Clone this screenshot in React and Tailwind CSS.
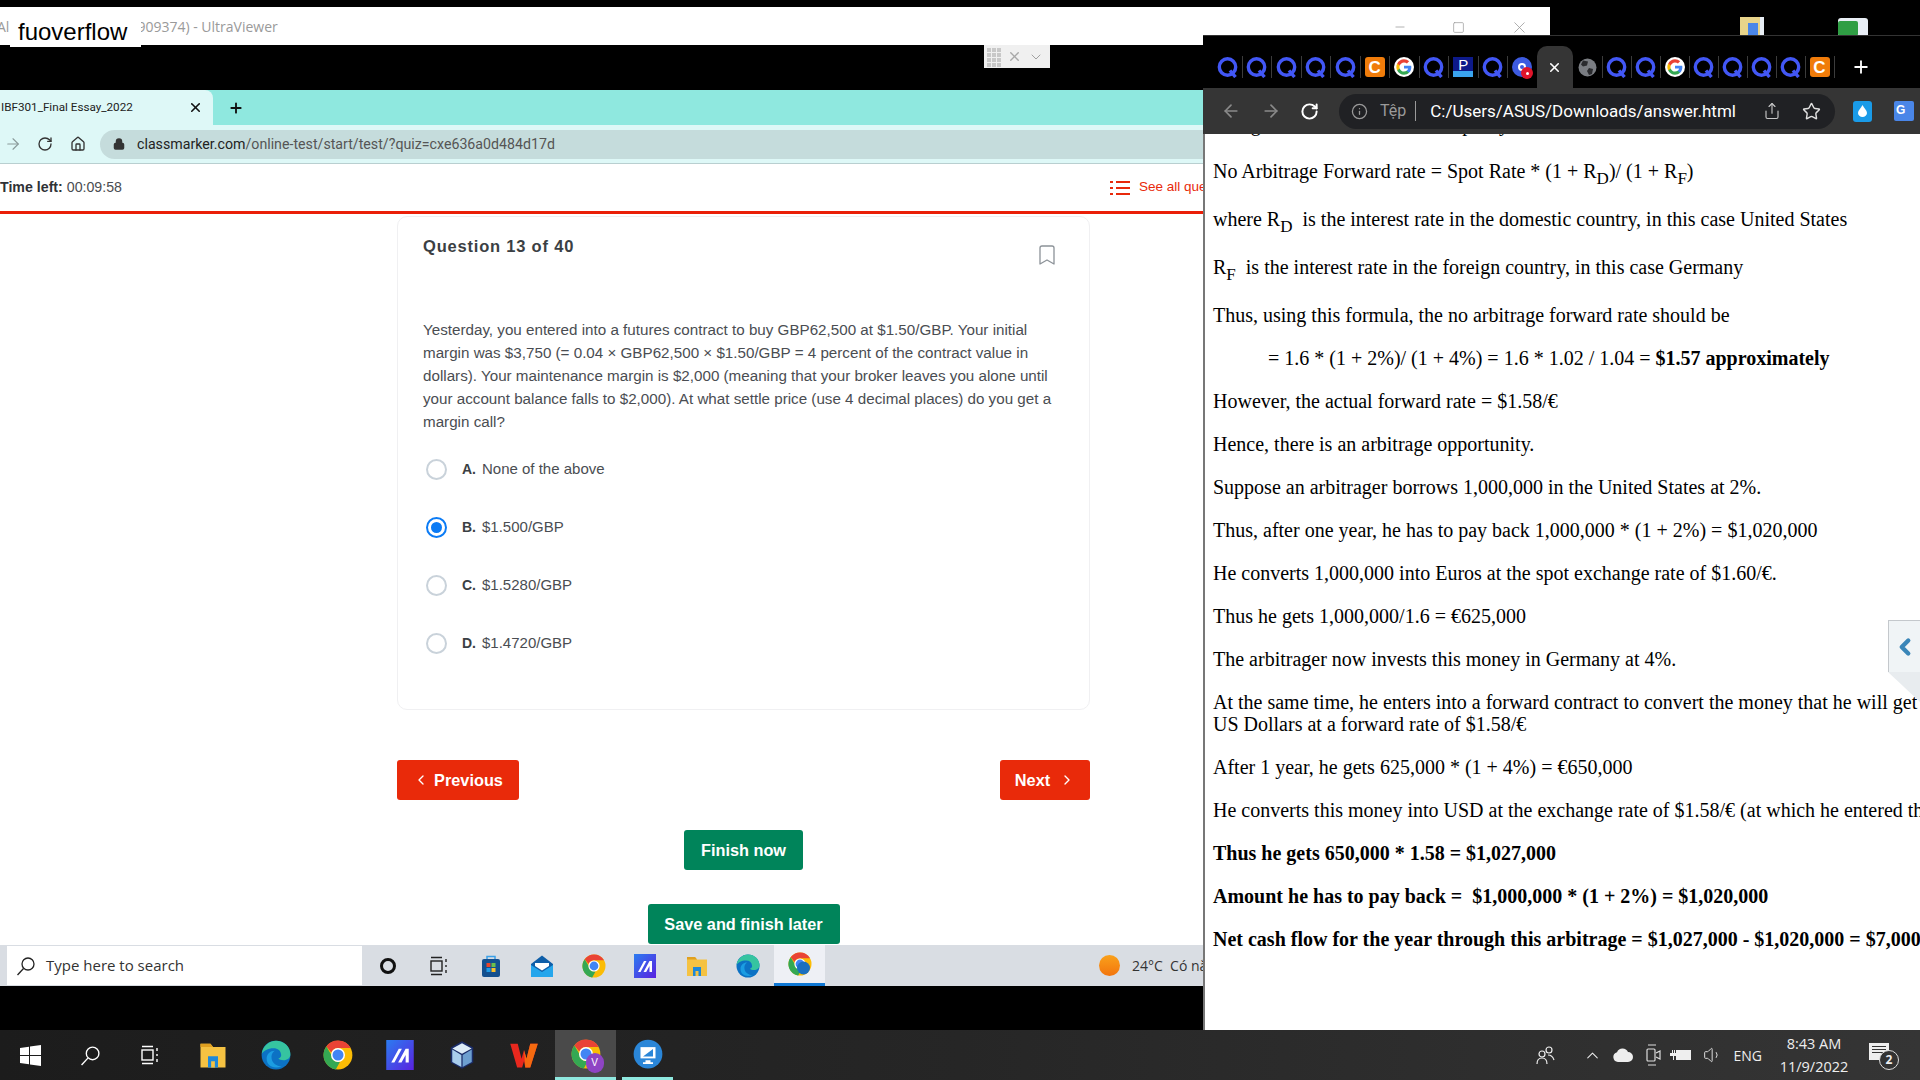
import React from 'react';
import { ArrowLeft, ArrowRight, RotateCw, Home, Lock, Info, Share, Star, Bookmark, ChevronLeft, ChevronRight, ChevronUp, Plus, X, Minus, Square, ChevronDown, Volume1 } from 'lucide-react';

// little app icons -------------------------------------------------------
function ChromeIcon({ size = 24, badge }) {
  return (
    <svg width={size} height={size} viewBox="0 0 24 24">
      <circle cx="12" cy="12" r="11.5" fill="#fbbc05" />
      <path d="M12 .5a11.5 11.5 0 0 1 10 5.8H12a5.7 5.7 0 0 0-5.3 3.6L2.7 5.2A11.5 11.5 0 0 1 12 .5z" fill="#ea4335" />
      <path d="M2.7 5.2l4 6.8a5.7 5.7 0 0 0 6.8 5.5l-3.3 6A11.5 11.5 0 0 1 2.7 5.2z" fill="#34a853" />
      <circle cx="12" cy="12" r="5.6" fill="#fff" />
      <circle cx="12" cy="12" r="4.4" fill="#4285f4" />
      {badge}
    </svg>
  );
}

function EdgeIcon({ size = 24 }) {
  return (
    <svg width={size} height={size} viewBox="0 0 24 24">
      <circle cx="12" cy="12" r="11.5" fill="#0c72c4" />
      <path d="M.6 11C1.4 4.8 6.4.5 12 .5c6.2 0 11.4 4.6 11.5 10.6.1 3.2-2.6 5-5.4 5-2 0-3.5-.6-4.2-1.4 1.6-.4 2.4-1.6 2.2-3C15.800 8.300 13.500 6.500 10 6.500 5.500 6.500 2 8.500.6 11z" fill="#36c4a0" />
      <path d="M4.500 15c0-4 3-6.500 6.500-6.500-2 1.500-3 3.500-2.500 6.500.5 3.500 4 6 8 6.200-1.300.5-2.800.8-4.500.8-4.500 0-7.500-3-7.500-7z" fill="#1b9de2" />
    </svg>
  );
}

function FolderIcon({ size = 24 }) {
  return (
    <svg width={size} height={size} viewBox="0 0 24 24">
      <path d="M2 3h8l2 2.500h10V22H2z" fill="#f5c242" />
      <path d="M2 3h8l2 2.500H2z" fill="#e0a020" />
      <path d="M8 13h8v9H8z" fill="#1e88d8" />
      <path d="M10.500 17h3v5h-3z" fill="#f5c242" />
    </svg>
  );
}

function MarkIcon({ size = 24 }) {
  return (
    <svg width={size} height={size} viewBox="0 0 24 24">
      <defs>
        <linearGradient id="markfill" x1="0" y1="0" x2="1" y2="1">
          <stop offset="0" stopColor="#2b7cf0" />
          <stop offset="1" stopColor="#5a22e0" />
        </linearGradient>
      </defs>
      <rect x="1" y="0" width="22" height="24" fill="url(#markfill)" />
      <path d="M5 18L11 7h2.500L7.500 18zM10.500 18L16.500 7H19v11h-2.500v-6l-3.300 6z" fill="#fff" />
    </svg>
  );
}

function StoreIcon({ size = 24 }) {
  return (
    <svg width={size} height={size} viewBox="0 0 24 24">
      <path d="M8 6V2.500h8V6" fill="none" stroke="#3aa0e8" strokeWidth="1.500" />
      <rect x="3" y="5" width="18" height="18" rx="2" fill="#14508f" />
      <rect x="7.500" y="9" width="4" height="4" fill="#e8442a" />
      <rect x="12.500" y="9" width="4" height="4" fill="#6cc04a" />
      <rect x="7.500" y="14" width="4" height="4" fill="#1e9be8" />
      <rect x="12.500" y="14" width="4" height="4" fill="#fbc02d" />
    </svg>
  );
}

function MailIcon({ size = 24 }) {
  return (
    <svg width={size} height={size} viewBox="0 0 24 24">
      <path d="M12 1.500L23 10v12H1V10z" fill="#0f5ea8" />
      <path d="M1 11l11 7 11-7v12H1z" fill="#25a6ec" />
      <path d="M5 9h14v3l-7 4.500L5 12z" fill="#fff" />
    </svg>
  );
}

function CubeIcon({ size = 24 }) {
  return (
    <svg width={size} height={size} viewBox="0 0 24 24">
      <path d="M12 1l9 5v12l-9 5-9-5V6z" fill="#1a2c68" />
      <path d="M12 2.500l7.700 4.300L12 11 4.300 6.800z" fill="#dcecf8" />
      <path d="M4.200 7.500L11.500 12v9.500l-7.300-4z" fill="#a8cdec" />
      <path d="M19.800 7.500L12.500 12v9.500l7.300-4z" fill="#6d9fd0" />
    </svg>
  );
}

function WpsIcon({ size = 24 }) {
  return (
    <svg width={size} height={size} viewBox="0 0 24 24">
      <path d="M1 3h6l3 12 2-7 2 7 3-12h6l-6 19h-4l-1-5-1.500 5h-4z" fill="#e8281e" />
      <path d="M12 8l2 7 3-12h6l-6 19h-4z" fill="#f56a10" />
    </svg>
  );
}

function MonitorIcon({ size = 24 }) {
  return (
    <svg width={size} height={size} viewBox="0 0 24 24">
      <circle cx="12" cy="12" r="11.500" fill="#2a86d8" />
      <rect x="6" y="6.500" width="12" height="9" fill="#fff" />
      <path d="M8 14l8-6v6z" fill="#2a86d8" />
      <path d="M10 17h4v1.500h2V20H8v-1.500h2z" fill="#fff" />
    </svg>
  );
}

function WeatherDot() {
  return <span className="w-[21px] h-[21px] rounded-full bg-gradient-to-b from-[#f9a11b] to-[#f2740d]" />;
}

function SearchGlass({ size = 20, color = '#222' }) {
  return (
    <svg width={size} height={size} viewBox="0 0 20 20" fill="none" stroke={color} strokeWidth="1.300">
      <circle cx="12" cy="8" r="6" />
      <path d="M7.500 12.500L1.500 19" />
    </svg>
  );
}

function TaskViewIcon({ color = '#222' }) {
  return (
    <svg width="20" height="20" viewBox="0 0 20 20" fill="none" stroke={color} strokeWidth="1.400">
      <path d="M2 1.500h11M2 18.500h11" />
      <rect x="2" y="5" width="11" height="10" />
      <path d="M17 3v3M17 9v2M17 14v3" />
    </svg>
  );
}

function WindowsLogo() {
  return (
    <svg width="21" height="21" viewBox="0 0 21 21" fill="#fff">
      <path d="M0 3l9-1.300V10H0zM10 1.500L21 0v10H10zM0 11h9v8.300L0 18zM10 11h11v10l-11-1.500z" />
    </svg>
  );
}

// favicons in the answer window's tab strip -------------------------------
function QFavicon() {
  return (
    <svg width="21" height="21" viewBox="0 0 21 21" fill="none">
      <circle cx="10.500" cy="10" r="8.200" stroke="#4257f5" strokeWidth="3.400" />
      <path d="M13 13.500l5.500 6.500" stroke="#4257f5" strokeWidth="3.400" />
    </svg>
  );
}

function GoogleFavicon() {
  return (
    <span className="w-[20px] h-[20px] rounded-full bg-white flex items-center justify-center">
      <svg width="16" height="16" viewBox="0 0 24 24">
        <path d="M23 12.300c0-.8-.1-1.600-.2-2.300H12v4.400h6.200c-.3 1.400-1.100 2.600-2.300 3.400v2.800h3.700c2.200-2 3.400-5 3.400-8.300z" fill="#4285f4" />
        <path d="M12 23.500c3.100 0 5.700-1 7.600-2.800l-3.700-2.900c-1 .7-2.300 1.100-3.900 1.100-3 0-5.500-2-6.400-4.700H1.800v2.900c1.900 3.800 5.800 6.400 10.200 6.400z" fill="#34a853" />
        <path d="M5.600 14.200c-.5-1.400-.5-3 0-4.400V6.900H1.800a11.500 11.500 0 0 0 0 10.200z" fill="#fbbc05" />
        <path d="M12 5.100c1.700 0 3.200.6 4.400 1.700l3.300-3.300C17.700 1.600 15.100.5 12 .5 7.600.5 3.700 3.100 1.800 6.900l3.800 2.900C6.500 7.100 9 5.100 12 5.100z" fill="#ea4335" />
      </svg>
    </span>
  );
}

function OrangeC() {
  return (
    <span className="w-[20px] h-[20px] rounded-[3px] bg-[#f07c0a] flex items-center justify-center text-white font-bold text-[17px] leading-none">C</span>
  );
}

function ParkingFav() {
  return (
    <span className="w-[20px] h-[20px] flex flex-col items-center bg-[#3aa4ef] overflow-hidden">
      <span className="w-full h-[14px] bg-[#0d1a8a] text-white text-[15px] leading-[15px] text-center">P</span>
    </span>
  );
}

function RedDotFav() {
  return (
    <span className="relative w-[20px] h-[20px] rounded-full bg-[#3d5be0] flex items-center justify-center">
      <span className="w-[8px] h-[8px] rounded-full border-2 border-white" />
      <span className="absolute -right-[1px] -bottom-[2px] w-[12px] h-[12px] rounded-full bg-[#e0142a] flex items-center justify-center">
        <span className="w-[3px] h-[3px] rounded-full bg-white" />
      </span>
    </span>
  );
}

function GlobeFav() {
  return (
    <svg width="19" height="19" viewBox="0 0 19 19">
      <circle cx="9.500" cy="9.500" r="9" fill="#7a7d82" />
      <path d="M5 2.500l5 1-1 4-4 1-2-2zM11 10l4 1-1 5-3 1-2-4z" fill="#2a2b2e" />
    </svg>
  );
}

const leftTabs = ['q', 'q', 'q', 'q', 'q', 'c', 'g', 'q', 'p', 'q', 'r'];
const rightTabs = ['o', 'q', 'q', 'g', 'q', 'q', 'q', 'q', 'c'];

function Fav({ kind }) {
  if (kind === 'c') return <OrangeC />;
  if (kind === 'g') return <GoogleFavicon />;
  if (kind === 'p') return <ParkingFav />;
  if (kind === 'r') return <RedDotFav />;
  if (kind === 'o') return <GlobeFav />;
  return <QFavicon />;
}

function FavCell({ kind, wide }) {
  return (
    <div className={`h-[42px] flex items-center shrink-0 ${wide ? 'w-[29.500px]' : 'w-[29px]'}`}>
      <div className="w-full h-[22px] border-r border-[#3c3c3c] flex items-center justify-center">
        <Fav kind={kind} />
      </div>
    </div>
  );
}

// the remote screen on the left --------------------------------------------
const options = [
  { key: 'A.', text: 'None of the above' },
  { key: 'B.', text: '$1.500/GBP', checked: true },
  { key: 'C.', text: '$1.5280/GBP' },
  { key: 'D.', text: '$1.4720/GBP' },
];

function QuestionCard() {
  return (
    <div className="w-[693px] h-[494px] mt-[2px] border border-[#f0f0f2] rounded-[10px] px-[25px] pt-[18px]">
      <div className="flex justify-between h-[79px]">
        <h2 className="text-[16.500px] leading-[22px] font-bold text-[#3b3f44] tracking-[0.8px]">Question 13 of 40</h2>
        <Bookmark className="mt-[8px] mr-[5px]" size={24} strokeWidth={1.300} color="#8c9298" />
      </div>
      <p className="mt-[4px] text-[15.200px] leading-[23px] text-[#4a4d52]">
        Yesterday, you entered into a futures contract to buy GBP62,500 at $1.50/GBP. Your initial margin was $3,750 (= 0.04 × GBP62,500 × $1.50/GBP = 4 percent of the contract value in dollars). Your maintenance margin is $2,000 (meaning that your broker leaves you alone until your account balance falls to $2,000). At what settle price (use 4 decimal places) do you get a margin call?
      </p>
      <div className="mt-[7px] flex flex-col">
        {options.map((opt) => (
          <div key={opt.key} className="h-[58px] flex items-center text-[15px] text-[#4a4d52]">
            {opt.checked ? (
              <span className="ml-[3px] w-[21px] h-[21px] rounded-full border-2 border-[#0b7bf5] flex items-center justify-center">
                <span className="w-[11px] h-[11px] rounded-full bg-[#0b7bf5]" />
              </span>
            ) : (
              <span className="ml-[3px] w-[21px] h-[21px] rounded-full border-2 border-[#c9d2da]" />
            )}
            <span className="ml-[15px] font-bold mr-[6px] text-[14px] text-[#3b3f44]">{opt.key}</span>
            <span>{opt.text}</span>
          </div>
        ))}
      </div>
    </div>
  );
}

function QuizPage() {
  return (
    <div className="h-[781px] bg-white overflow-hidden">
      <div className="h-[50px] flex items-center border-b-[3px] border-[#ea1f08]">
        <span className="w-[1109px] shrink-0 text-[14.200px] text-[#4a4d52]"><b className="text-[#2f3236]">Time left:</b> 00:09:58</span>
        <div className="flex items-center gap-[8px] text-[#e8290b] text-[13.500px]">
          <svg width="22" height="18" viewBox="0 0 22 18" fill="none" stroke="#e8290b" strokeWidth="2">
            <path d="M1 3h3M7 3h14M1 9h3M7 9h14M1 15h3M7 15h14" />
          </svg>
          See all questions
        </div>
      </div>
      <div className="ml-[397px] w-[693px] flex flex-col">
        <QuestionCard />
        <div className="mt-[50px] flex justify-between">
          <button className="w-[122px] h-[40px] bg-[#e92a0a] rounded-[3px] text-white font-bold text-[16.300px] flex items-center justify-center gap-[5px]">
            <ChevronLeft size={16} strokeWidth={2} />
            Previous
          </button>
          <button className="w-[90px] h-[40px] bg-[#e92a0a] rounded-[3px] text-white font-bold text-[16.300px] flex items-center justify-center gap-[9px]">
            Next
            <ChevronRight size={16} strokeWidth={2} />
          </button>
        </div>
        <button className="mt-[30px] self-center w-[119px] h-[40px] bg-[#00845a] rounded-[3px] text-white font-bold text-[16.300px]">Finish now</button>
        <button className="mt-[34px] self-center w-[192px] h-[40px] bg-[#00845a] rounded-[3px] text-white font-bold text-[16.300px]">Save and finish later</button>
      </div>
    </div>
  );
}

function RemoteTaskbar() {
  const cells = [
    <span key="o" className="w-[16px] h-[16px] rounded-full border-[3px] border-[#111]" />,
    <TaskViewIcon key="t" />,
    <StoreIcon key="s" />,
    <MailIcon key="m" />,
    <ChromeIcon key="c" />,
    <MarkIcon key="a" />,
    <FolderIcon key="f" />,
    <EdgeIcon key="e" />,
  ];
  return (
    <div className="h-[41px] bg-[#d9dde3] flex items-stretch">
      <div className="ml-[7px] mt-[1px] w-[355px] h-[39px] bg-white flex items-center text-[15px] text-[#333] font-['Open_Sans',sans-serif]">
        <span className="ml-[9px] mr-[10px]"><SearchGlass /></span>
        Type here to search
      </div>
      <div className="flex">
        {cells.map((c) => (
          <div key={c.key} className="w-[51.500px] flex items-center justify-center shrink-0">{c}</div>
        ))}
        <div className="w-[51px] bg-[#eef0f5] border-b-[3px] border-[#0f78d4] flex items-center justify-center">
          <ChromeIcon badge={<circle cx="15.500" cy="16" r="6.500" fill="#1a6fc0" />} />
        </div>
      </div>
      <div className="ml-[274px] flex items-center gap-[12px] text-[14px] text-[#333] font-['Open_Sans',sans-serif]">
        <WeatherDot />
        <span>24°C&nbsp; Có nắng</span>
      </div>
    </div>
  );
}

function UltraViewerWindow() {
  return (
    <div className="absolute left-0 top-[7px] w-[1550px]">
      <div className="h-[38px] bg-white flex items-center justify-between text-[14px] text-[#9a9a9a] font-['Open_Sans',sans-serif]">
        <span className="whitespace-nowrap -ml-[3px]">Al<span className="ml-[128px]">909374) - UltraViewer</span></span>
        <div className="flex items-center text-[#999] mt-[2px]">
          <span className="w-[59px] flex justify-center"><Minus size={14} strokeWidth={1.300} /></span>
          <span className="w-[59px] flex justify-center"><Square size={13} strokeWidth={1.300} /></span>
          <span className="w-[62px] flex justify-center"><X size={19} strokeWidth={1} /></span>
        </div>
      </div>
      <div className="h-[45px] bg-black">
        <div className="ml-[984px] w-[66px] h-[23px] bg-[#f0f0f0] flex items-center">
          <span className="ml-[2px] w-[15px] h-[20px] bg-[#c8c8c8] bg-[linear-gradient(#f0f0f0_1px,transparent_1px),linear-gradient(90deg,#f0f0f0_1px,transparent_1px)] bg-[length:5px_5px]" />
          <X className="ml-[6px]" size={15} strokeWidth={2.200} color="#a8a8a8" />
          <ChevronDown className="ml-[6px]" size={16} strokeWidth={1.500} color="#a0a0a0" />
        </div>
      </div>
      <div className="h-[35px] bg-[#8fe8df] flex items-stretch">
        <div className="w-[213px] bg-[#def8f7] rounded-tr-[8px] flex items-center justify-between text-[11.700px] text-[#222] font-['Roboto',sans-serif]">
          <span className="ml-[1px]">IBF301_Final Essay_2022</span>
          <X className="mr-[10px]" size={15} strokeWidth={2.500} color="#111" />
        </div>
        <div className="ml-[15px] flex items-center"><Plus size={16} strokeWidth={2.800} color="#111" /></div>
      </div>
      <div className="h-[39px] bg-[#def8f7] border-b border-[#b9cfd0] flex items-center">
        <ArrowRight className="ml-[4px]" size={18} strokeWidth={1.500} color="#8a9a9a" />
        <RotateCw className="ml-[15px]" size={16} strokeWidth={2} color="#333" />
        <Home className="ml-[17px]" size={16} strokeWidth={2} color="#333" />
        <div className="ml-[14px] flex-1 h-[29px] rounded-[15px] bg-[#c5dcdc] flex items-center text-[14.200px] font-['Roboto',sans-serif]">
          <Lock className="ml-[13px]" size={12} strokeWidth={3} color="#333" fill="#333" />
          <span className="ml-[12px] pt-[2px] text-[#222]">classmarker.com<span className="text-[#555]">/online-test/start/test/?quiz=cxe636a0d484d17d</span></span>
        </div>
      </div>
      <QuizPage />
      <RemoteTaskbar />
    </div>
  );
}

// the answer window on the right --------------------------------------------
const SUB = 'relative bottom-[-6px] text-[17px] align-baseline';

function AnswerDoc() {
  return (
    <div className="flex-1 bg-white border-l-2 border-[#777] overflow-hidden pl-[8px] font-['Liberation_Serif',serif] text-[20px] leading-[22px] text-black whitespace-nowrap">
      <p className="-mt-[21px] mb-[25px]">Using the covered interest rate parity</p>
      <p className="mb-[26px]">No Arbitrage Forward rate = Spot Rate * (1 + R<sub className={SUB}>D</sub>)/ (1 + R<sub className={SUB}>F</sub>)</p>
      <p className="mb-[26px]">where R<sub className={SUB}>D</sub>&nbsp; is the interest rate in the domestic country, in this case United States</p>
      <p className="mb-[26px]">R<sub className={SUB}>F</sub>&nbsp; is the interest rate in the foreign country, in this case Germany</p>
      <p className="mb-[21px]">Thus, using this formula, the no arbitrage forward rate should be</p>
      <p className="mb-[21px] pl-[55px]">= 1.6 * (1 + 2%)/ (1 + 4%) = 1.6 * 1.02 / 1.04 = <b>$1.57 approximately</b></p>
      <p className="mb-[21px]">However, the actual forward rate = $1.58/€</p>
      <p className="mb-[21px]">Hence, there is an arbitrage opportunity.</p>
      <p className="mb-[21px]">Suppose an arbitrager borrows 1,000,000 in the United States at 2%.</p>
      <p className="mb-[21px]">Thus, after one year, he has to pay back 1,000,000 * (1 + 2%) = $1,020,000</p>
      <p className="mb-[21px]">He converts 1,000,000 into Euros at the spot exchange rate of $1.60/€.</p>
      <p className="mb-[21px]">Thus he gets 1,000,000/1.6 = €625,000</p>
      <p className="mb-[21px]">The arbitrager now invests this money in Germany at 4%.</p>
      <p className="mb-[21px]">At the same time, he enters into a forward contract to convert the money that he will get<br />US Dollars at a forward rate of $1.58/€</p>
      <p className="mb-[21px]">After 1 year, he gets 625,000 * (1 + 4%) = €650,000</p>
      <p className="mb-[21px]">He converts this money into USD at the exchange rate of $1.58/€ (at which he entered the</p>
      <p className="mb-[21px] font-bold">Thus he gets 650,000 * 1.58 = $1,027,000</p>
      <p className="mb-[21px] font-bold">Amount he has to pay back =&nbsp; $1,000,000 * (1 + 2%) = $1,020,000</p>
      <p className="font-bold">Net cash flow for the year through this arbitrage = $1,027,000 - $1,020,000 = $7,000</p>
    </div>
  );
}

function AnswerWindow() {
  return (
    <div className="absolute left-[1203px] top-[35px] w-[717px] h-[995px] flex flex-col">
      <div className="h-[53px] bg-black flex items-end pl-[10px] border-t border-[#333]">
        {leftTabs.map((k, i) => <FavCell key={i} kind={k} wide />)}
        <div className="w-[36px] h-[42px] -ml-[1px] mr-[1px] bg-[#353535] rounded-t-[10px] flex items-center justify-center shrink-0">
          <X size={15} strokeWidth={2.500} color="#fff" />
        </div>
        {rightTabs.map((k, i) => <FavCell key={i} kind={k} />)}
        <div className="ml-[16px] h-[42px] flex items-center"><Plus size={20} strokeWidth={2.200} color="#fff" /></div>
      </div>
      <div className="h-[46px] bg-[#353535] flex items-center overflow-hidden">
        <ArrowLeft className="ml-[18px] shrink-0" size={20} strokeWidth={2} color="#8a8a8a" />
        <ArrowRight className="ml-[20px] shrink-0" size={20} strokeWidth={2} color="#8a8a8a" />
        <RotateCw className="ml-[19px] shrink-0" size={19} strokeWidth={2.500} color="#fff" />
        <div className="ml-[20px] w-[496px] shrink-0 h-[35px] rounded-[18px] bg-[#202124] flex items-center font-['Roboto',sans-serif]">
          <Info className="ml-[12px]" size={17} strokeWidth={1.800} color="#9a9a9a" />
          <span className="ml-[12px] text-[#9a9a9a] text-[16px]">Tệp</span>
          <span className="ml-[9px] w-[1px] h-[20px] bg-[#9a9a9a]" />
          <span className="ml-[14px] pt-[1px] text-white text-[17px] whitespace-nowrap">C:/Users/ASUS/Downloads/answer.html</span>
          <Share className="ml-auto" size={18} strokeWidth={1.500} color="#c8c8c8" />
          <Star className="ml-[21px] mr-[14px]" size={19} strokeWidth={1.800} color="#e0e0e0" />
        </div>
        <span className="ml-[18px] shrink-0 w-[19px] h-[21px] rounded-[3px] bg-[#1a9be8] flex items-center justify-center">
          <svg width="9" height="12" viewBox="0 0 9 12"><path d="M4.500 0C6 3 9 5.500 9 8a4.500 4 0 0 1-9 0C0 5.500 3 3 4.500 0z" fill="#fff" /></svg>
        </span>
        <span className="ml-[22px] shrink-0 w-[20px] h-[20px] rounded-[2px] bg-[#4a86e8] text-white text-[12px] font-bold leading-[18px] pl-[2px]">G</span>
      </div>
      <AnswerDoc />
      <div className="absolute right-0 top-[585px] w-[32px] flex flex-col">
        <div className="h-[52px] bg-[#f0f4f6] border-l border-t border-[#c4c8cc] flex items-center justify-center">
          <ChevronLeft size={26} strokeWidth={4} color="#3a86b8" />
        </div>
        <svg width="32" height="30" viewBox="0 0 32 30"><path d="M0 0H32V30z" fill="#e8ecef" /></svg>
      </div>
    </div>
  );
}

function MainTaskbar() {
  const cells = [
    { w: 60, icon: <WindowsLogo /> },
    { w: 60, icon: <SearchGlass size={21} color="#fff" /> },
    { w: 60, icon: <TaskViewIcon color="#fff" /> },
    { w: 65, icon: <FolderIcon size={30} /> },
    { w: 62, icon: <EdgeIcon size={30} /> },
    { w: 62, icon: <ChromeIcon size={30} /> },
    { w: 62, icon: <MarkIcon size={30} /> },
    { w: 62, icon: <CubeIcon size={30} /> },
    { w: 62, icon: <WpsIcon size={30} /> },
  ];
  return (
    <div className="h-[50px] bg-gradient-to-r from-[#1c1c1c] via-[#262626] to-[#353535] flex items-stretch text-white">
      {cells.map((c, i) => (
        <div key={i} className="flex items-center justify-center shrink-0" style={{ width: c.w }}>{c.icon}</div>
      ))}
      <div className="w-[61px] bg-[#4a4a4a] border-b-[3px] border-[#8fe8df] flex items-center justify-center">
        <div className="relative">
          <ChromeIcon size={30} />
          <span className="absolute -right-[3px] -bottom-[4px] w-[18px] h-[20px] rounded-full bg-[#8e44c4] text-[10px] text-white flex items-center justify-center">V</span>
        </div>
      </div>
      <div className="ml-[6px] w-[51px] border-b-[3px] border-[#8fe8df] flex items-center justify-center">
        <MonitorIcon size={30} />
      </div>
      <div className="ml-auto flex items-center text-[#eee] font-['Open_Sans',sans-serif]">
        <svg width="20" height="20" viewBox="0 0 20 20" fill="none" stroke="#eee" strokeWidth="1.200">
          <circle cx="13" cy="5" r="3" />
          <circle cx="6" cy="9" r="3" />
          <path d="M1 19c0-4 2-6 5-6s5 2 5 6M12 10c3 0 5 2 6 5" />
        </svg>
        <ChevronUp className="ml-[27px]" size={19} strokeWidth={1.300} color="#eee" />
        <svg className="ml-[11px]" width="20" height="14" viewBox="0 0 20 14"><path d="M5 14a5 5 0 0 1-1-9.800A6 6 0 0 1 15 4a5 5 0 0 1 0 10z" fill="#eee" /></svg>
        <svg className="ml-[12px]" width="16" height="26" viewBox="0 0 16 26" fill="none" stroke="#ddd" strokeWidth="1.200">
          <rect x="2" y="7" width="8" height="12" rx="1" />
          <path d="M11 11l4-2v8l-4-2M3 3h8M3 23h8" />
        </svg>
        <svg className="ml-[9px]" width="22" height="14" viewBox="0 0 22 14">
          <rect x="6" y="2" width="15" height="10" fill="#eee" />
          <path d="M0 5h2V2h1v3h1V2h1v3h1v3H4v4H3V8H0z" fill="#eee" />
        </svg>
        <Volume1 className="ml-[11px]" size={20} strokeWidth={1.200} color="#ddd" />
        <span className="ml-[11px] text-[14px]">ENG</span>
        <div className="ml-[12px] w-[80px] flex flex-col items-center text-[14.500px] leading-[23px]">
          <span>8:43 AM</span>
          <span>11/9/2022</span>
        </div>
        <div className="relative ml-[15px] mr-[31px] w-[20px] h-[28px]">
          <span className="absolute left-0 top-[2px] w-[20px] h-[17px] bg-[#eee] flex flex-col gap-[2px] px-[3px] pt-[3px]">
            <span className="h-[1px] bg-[#333]" />
            <span className="h-[1px] bg-[#333]" />
            <span className="h-[1px] bg-[#333]" />
          </span>
          <span className="absolute left-[10px] top-[9px] w-[20px] h-[20px] rounded-full bg-[#333] border border-[#ddd] flex items-center justify-center text-[12px] font-bold">2</span>
        </div>
      </div>
    </div>
  );
}

export default function App() {
  return (
    <div className="w-[1920px] h-[1080px] bg-black overflow-hidden flex flex-col font-['Liberation_Sans',sans-serif]">
      <div className="relative flex-1">
        <UltraViewerWindow />
        {/* desktop shortcuts peeking out behind the answer window */}
        <div className="absolute left-[1740px] top-[17px] w-[24px] h-[20px] bg-[#e8d48a] border-r-4 border-[#e8eef5]">
          <span className="block ml-[8px] mt-[6px] w-[10px] h-[14px] bg-[#4a86e8]" />
        </div>
        <div className="absolute left-[1838px] top-[18px] w-[30px] h-[18px] bg-[#e8eef5] rounded-t-[3px]">
          <span className="block mt-[3px] w-[20px] h-[15px] rounded-[2px] bg-[#2f9e44]" />
        </div>
        <AnswerWindow />
        {/* watermark */}
        <div className="absolute left-[10px] top-[7px] w-[131px] h-[40px] bg-white flex items-center pl-[8px] text-black text-[24px] leading-none pt-[9px]">fuoverflow</div>
      </div>
      <MainTaskbar />
    </div>
  );
}
